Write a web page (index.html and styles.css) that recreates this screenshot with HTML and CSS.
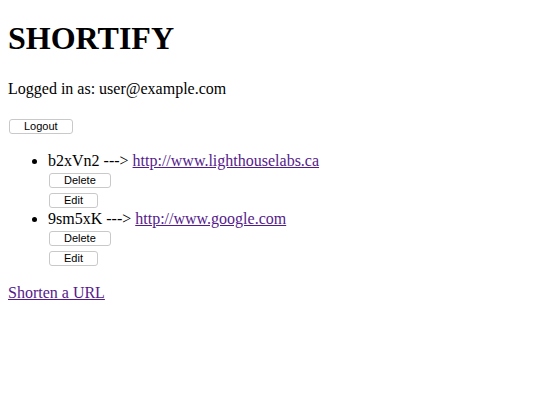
FILE: index.html
```html
<!DOCTYPE html>
<html>
<head>
<meta charset="utf-8">
<link rel="stylesheet" href="styles.css">
</head>
<body>
<h1 class="title">SHORTIFY</h1>
<p class="who">Logged in as: user@example.com</p>
<form class="logout"><button class="btn" type="button">Logout</button></form>
<ul class="urls">
  <li>b2xVn2 ---&gt; <a class="link" href="#">http://www.lighthouselabs.ca</a>
    <form class="act"><button class="btn" type="button">Delete</button></form>
    <form class="act"><button class="btn" type="button">Edit</button></form>
  </li>
  <li>9sm5xK ---&gt; <a class="link" href="#">http://www.google.com</a>
    <form class="act"><button class="btn" type="button">Delete</button></form>
    <form class="act"><button class="btn" type="button">Edit</button></form>
  </li>
</ul>
<a class="link" href="#">Shorten a URL</a>
</body>
</html>
```
FILE: styles.css
```css
body {
  margin: 8px;
  font-family: "Liberation Serif", "Times New Roman", serif;
  font-size: 16px;
  color: #000;
  background: #fff;
}
.title {
  font-size: 32px;
  font-weight: bold;
  margin: 12px 0 23px;
}
.who {
  margin: 16px 0 18px;
}
.logout, .act {
  margin: 0;
}
.btn {
  font-family: "Liberation Sans", Arial, sans-serif;
  font-size: 11px;
  line-height: 13px;
  height: 15px;
  padding: 0 14px;
  margin: 2px 1px;
  background: #fff;
  border: 1px solid #c9c9c9;
  border-radius: 3px;
  color: #000;
}
.urls {
  margin: 16px 0;
  padding-left: 40px;
}
.link {
  color: #551a8b;
}
```
